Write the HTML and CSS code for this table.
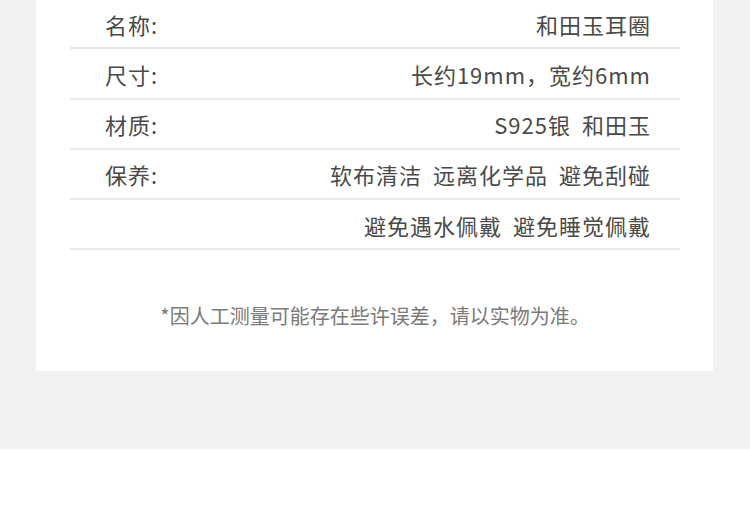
FILE: index.html
```html
<!doctype html>
<html>
    <head>
        <meta charset="utf-8" />
        <title>商品参数</title>
        <link rel="stylesheet" href="styles.css">
    </head>
    <body>
        <div class="page">
            <section class="card">
                <ul class="specs">
                    <li class="row">
                        <span class="label">名称:</span>
                        <span class="value"><span>和田玉耳圈</span></span>
                    </li>
                    <li class="row">
                        <span class="label">尺寸:</span>
                        <span class="value"><span>长约19mm，宽约6mm</span></span>
                    </li>
                    <li class="row">
                        <span class="label">材质:</span>
                        <span class="value"><span>S925银</span><span>和田玉</span></span>
                    </li>
                    <li class="row">
                        <span class="label">保养:</span>
                        <span class="value"><span>软布清洁</span><span>远离化学品</span><span>避免刮碰</span></span>
                    </li>
                    <li class="row">
                        <span class="label"></span>
                        <span class="value"><span>避免遇水佩戴</span><span>避免睡觉佩戴</span></span>
                    </li>
                </ul>
                <p class="note">*因人工测量可能存在些许误差，请以实物为准。</p>
            </section>
        </div>
    </body>
</html>
```

FILE: styles.css
```css
html, body {
    margin: 0px;
    padding: 0px;
    background-color: white;
    font-family: "Noto Sans CJK SC", "Noto Sans", sans-serif;
}

.page {
    background-color: #f2f2f2;
    padding: 0px 37px 78px 36px;
}

.card {
    background-color: white;
    margin-top: -1px;
    padding: 0px 33px 41px 34px;
}

.specs {
    list-style: none;
    margin: 0px;
    padding: 0px;
}

.row {
    display: flex;
    justify-content: space-between;
    align-items: center;
    box-sizing: content-box;
    height: 44.25px;
    padding: 4px 30px 0px 35px;
    border-bottom: 2px solid #e9e9e9;
    font-size: 22px;
    line-height: 28px;
    color: #4a4a4a;
    letter-spacing: 1px;
}

.label {
    padding-bottom: 3px;
}

.value {
    display: flex;
    gap: 11px;
    padding-bottom: 3px;
    margin-right: -1px;
}

.note {
    margin: 52px 0px 0px 0px;
    text-align: center;
    font-size: 20px;
    line-height: 28px;
    color: #7a7a7a;
}
```
